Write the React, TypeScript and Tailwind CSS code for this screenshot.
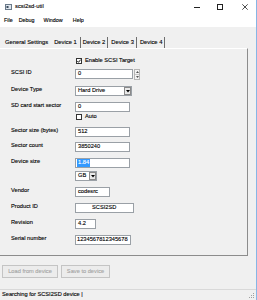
import React from "react";

function Check({ checked }: { checked?: boolean }) {
  return (
    <div className="w-[6px] h-[6px] border border-[#333] bg-white flex items-center justify-center shrink-0">
      {checked && (
        <svg width="4" height="4" viewBox="0 0 4 4">
          <path d="M0.3 2 L1.5 3.3 L3.7 0.6" stroke="#000" strokeWidth="0.9" fill="none" />
        </svg>
      )}
    </div>
  );
}

function Row({ label, mt, children }: { label?: string; mt: string; children: React.ReactNode }) {
  return (
    <div className={`flex items-start h-[10px] ${mt}`}>
      <div className="w-[64px] pt-[1px] shrink-0">{label}</div>
      {children}
    </div>
  );
}

function Box({ w, children, pl = "pl-[2px]" }: { w: string; children?: React.ReactNode; pl?: string }) {
  return (
    <div className={`${w} h-[10px] border border-[#9aa0a6] bg-white flex items-center ${pl} whitespace-pre overflow-hidden`}>
      {children}
    </div>
  );
}

function Arrow() {
  return (
    <div className="w-[7px] h-[8px] border border-[#8a8a8a] bg-[#e9e9e9] flex items-center justify-center">
      <svg width="4" height="3" viewBox="0 0 4 3">
        <path d="M0 0 H4 L2 2.5 Z" fill="#000" />
      </svg>
    </div>
  );
}

export default function App() {
  return (
    <div className="w-[257px] h-[300px] bg-[#f0f0f0] border-r border-[#86b6e6] flex flex-col text-[5.7px] leading-none text-black font-['Liberation_Sans',Arial,sans-serif] overflow-hidden [-webkit-text-stroke:0.12px_#000]">
      {/* title bar */}
      <div className="h-[14px] bg-white flex items-center shrink-0">
        <svg className="ml-[5px]" width="7" height="6" viewBox="0 0 7 6">
          <rect x="0.5" y="0.5" width="6" height="5" fill="#dfe6ee" stroke="#6a7a8a" />
          <rect x="1.5" y="2" width="2" height="2" fill="#3a4a5a" />
        </svg>
        <span className="ml-[3px] text-[5.8px]">scsi2sd-util</span>
        <div className="ml-auto flex items-center">
          <div className="w-[6px] h-px bg-[#222]" />
          <div className="ml-[17px] w-[6px] h-[6px] border border-[#222]" />
          <svg className="ml-[19px] mr-[8px]" width="6" height="6" viewBox="0 0 6 6">
            <path d="M0.3 0.3 L5.7 5.7 M5.7 0.3 L0.3 5.7" stroke="#222" strokeWidth="0.8" />
          </svg>
        </div>
      </div>
      {/* menu bar */}
      <div className="h-[13px] bg-white flex items-center pl-[4px] shrink-0 text-[5.4px]">
        <span>File</span>
        <span className="ml-[6px]">Debug</span>
        <span className="ml-[9px]">Window</span>
        <span className="ml-[10px]">Help</span>
      </div>
      {/* tabs */}
      <div className="mt-[10px] h-[11px] flex items-center pl-[5px] shrink-0 text-[5.8px]">
        <span className="mr-[4px]">General Settings</span>
        <span className="h-[11px] pl-[2px] pr-[3px] flex items-center border-r border-[#6e6e6e]">Device 1</span>
        <span className="h-[11px] pl-[2px] pr-[2px] flex items-center border-r border-[#6e6e6e]">Device 2</span>
        <span className="h-[11px] pl-[3px] pr-[2px] flex items-center border-r border-[#6e6e6e]">Device 3</span>
        <span className="h-[11px] pl-[3px] pr-[2px] flex items-center border-r border-[#6e6e6e]">Device 4</span>
      </div>
      {/* panel */}
      <div className="w-[248px] h-[208px] shrink-0 border-t border-t-white border-r border-b border-[#8c8c8c] flex flex-col pl-[11px]">
        <div className="flex items-center h-[7px] mt-[8px] pl-[65px]">
          <Check checked />
          <span className="ml-[3px]">Enable SCSI Target</span>
        </div>
        <Row label="SCSI ID" mt="mt-[5px]">
          <Box w="w-[58px]">0</Box>
          <div className="ml-[1px] w-[6px] h-[11px] flex flex-col border border-[#b5b5b5] bg-[#f4f4f4]">
            <div className="flex-1 flex items-center justify-center border-b border-[#c8c8c8]">
              <svg width="3" height="2" viewBox="0 0 3 2"><path d="M0 2 H3 L1.5 0 Z" fill="#555" /></svg>
            </div>
            <div className="flex-1 flex items-center justify-center">
              <svg width="3" height="2" viewBox="0 0 3 2"><path d="M0 0 H3 L1.5 2 Z" fill="#555" /></svg>
            </div>
          </div>
        </Row>
        <Row label="Device Type" mt="mt-[7px]">
          <div className="w-[57px] h-[10px] border border-[#9aa0a6] bg-white flex items-center pl-[2px] justify-between">
            <span>Hard Drive</span>
            <Arrow />
          </div>
        </Row>
        <Row label="SD card start sector" mt="mt-[6px]">
          <Box w="w-[55px]">0</Box>
        </Row>
        <div className="flex items-center h-[6px] mt-[2px] pl-[65px]">
          <Check />
          <span className="ml-[3px]">Auto</span>
        </div>
        <Row label="Sector size (bytes)" mt="mt-[7px]">
          <Box w="w-[55px]">512</Box>
        </Row>
        <Row label="Sector count" mt="mt-[5px]">
          <Box w="w-[55px]">3850240</Box>
        </Row>
        <Row label="Device size" mt="mt-[6px]">
          <Box w="w-[55px]" pl="pl-[1px]">
            <span className="bg-[#3399ff] text-white [-webkit-text-stroke:0.12px_#fff] px-[1px] py-[1px]">1.84</span>
          </Box>
        </Row>
        <Row mt="mt-[3px]">
          <div className="w-[22px] h-[10px] border border-[#9aa0a6] bg-white flex items-center pl-[2px] justify-between">
            <span>GB</span>
            <Arrow />
          </div>
        </Row>
        <Row label="Vendor" mt="mt-[6px]">
          <Box w="w-[35px]">codesrc</Box>
        </Row>
        <Row label="Product ID" mt="mt-[6px]">
          <Box w="w-[59px]" pl="pl-[16px]">SCSI2SD</Box>
        </Row>
        <Row label="Revision" mt="mt-[6px]">
          <Box w="w-[21px]">4.2</Box>
        </Row>
        <Row label="Serial number" mt="mt-[6px]">
          <Box w="w-[56px]" pl="pl-[1px]">1234567812345678</Box>
        </Row>
      </div>
      {/* buttons */}
      <div className="mt-[9px] h-[13px] flex pl-[2px] gap-[3px] shrink-0">
        <div className="w-[56px] h-[13px] border border-[#c4c4c4] bg-[#ececec] text-[#a3a3a3] [-webkit-text-stroke:0.1px_#a3a3a3] flex items-center justify-center">Load from device</div>
        <div className="w-[49px] h-[13px] border border-[#c4c4c4] bg-[#ececec] text-[#a3a3a3] [-webkit-text-stroke:0.1px_#a3a3a3] flex items-center justify-center">Save to device</div>
      </div>
      {/* status bar */}
      <div className="mt-[11px] h-[11px] border-t border-[#d9d9d9] flex items-center pl-[2px] shrink-0 relative">
        <span>Searching for SCSI2SD device |</span>
        <svg className="absolute right-[1px] bottom-[1px]" width="7" height="7" viewBox="0 0 7 7">
          <rect x="5" y="1" width="1" height="1" fill="#a0a0a0" />
          <rect x="3" y="3" width="1" height="1" fill="#a0a0a0" />
          <rect x="5" y="3" width="1" height="1" fill="#a0a0a0" />
          <rect x="1" y="5" width="1" height="1" fill="#a0a0a0" />
          <rect x="3" y="5" width="1" height="1" fill="#a0a0a0" />
          <rect x="5" y="5" width="1" height="1" fill="#a0a0a0" />
        </svg>
      </div>
    </div>
  );
}
